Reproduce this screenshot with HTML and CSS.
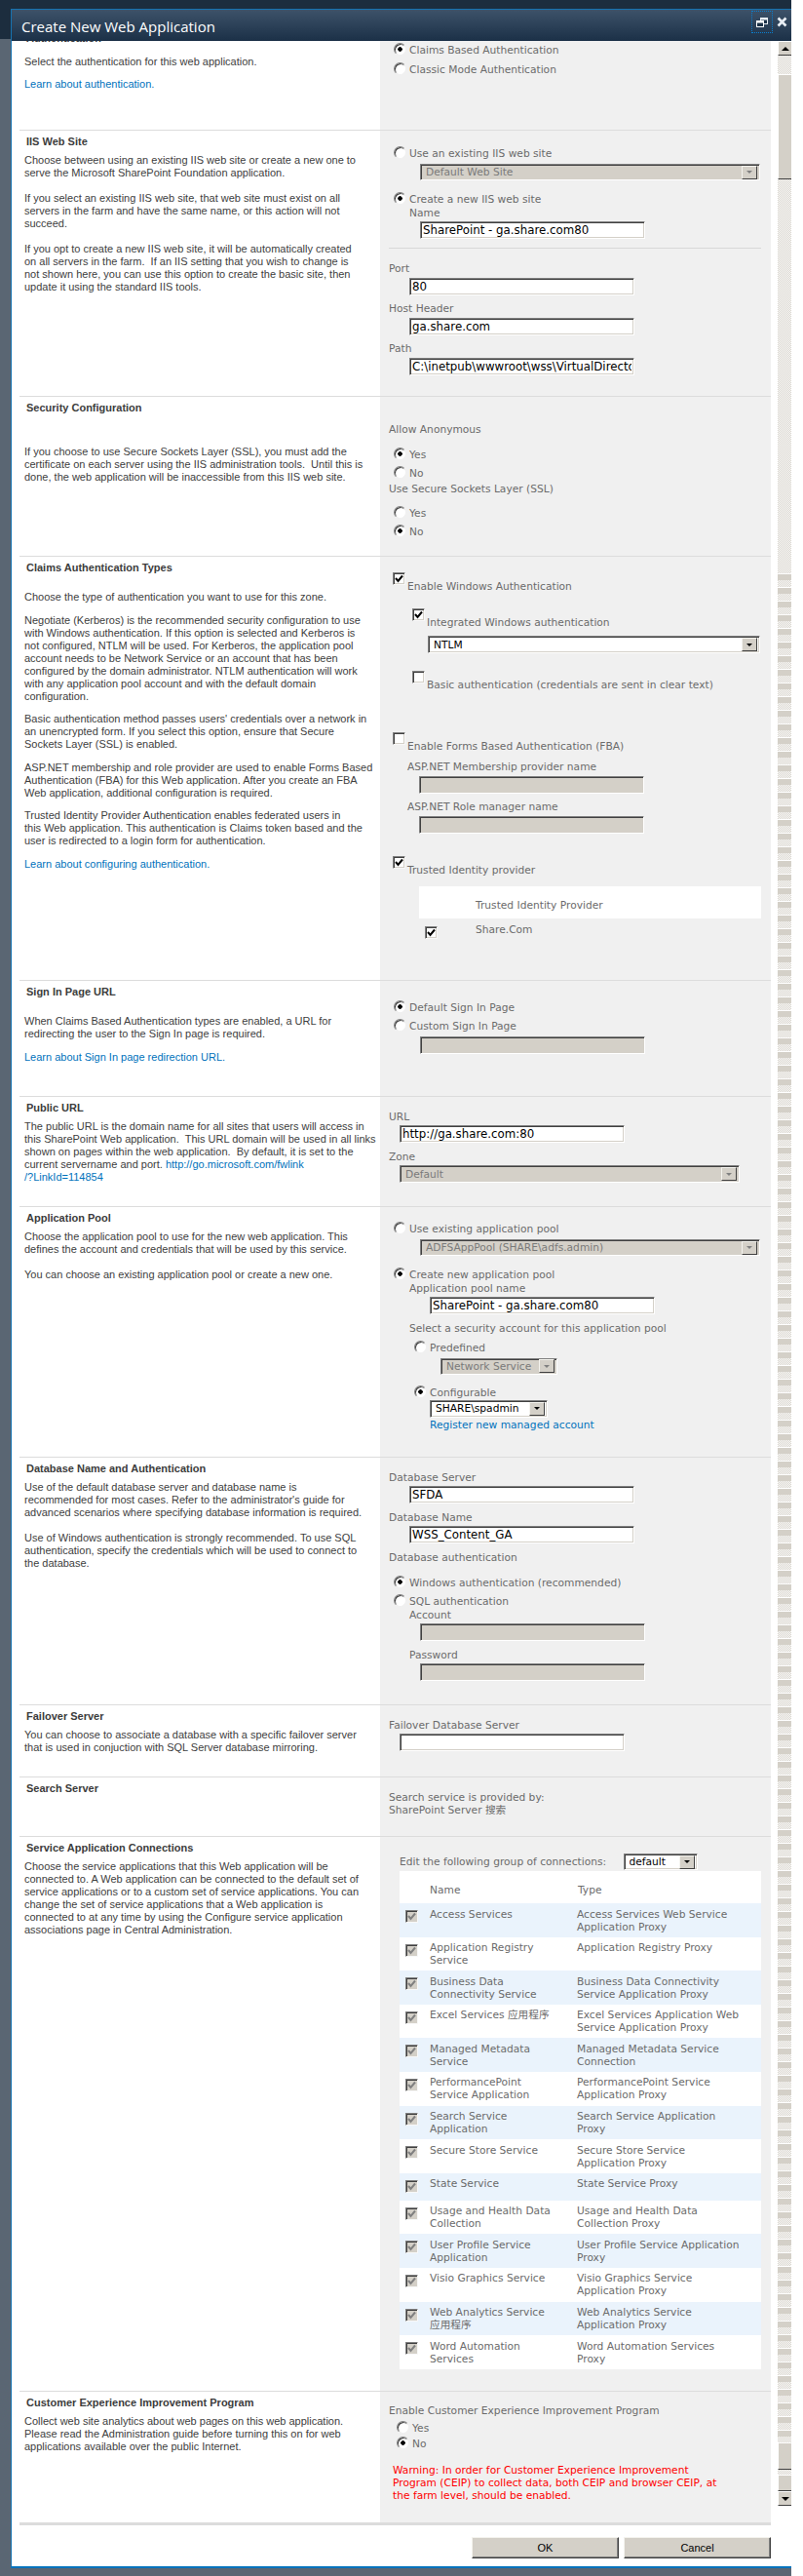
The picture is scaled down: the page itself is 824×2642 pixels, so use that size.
FILE: index.html
```html
<!DOCTYPE html>
<html>
<head>
  <meta charset="utf-8" />
  <title>Create New Web Application</title>
  <link rel="stylesheet" href="styles.css">
</head>
<body>
  <div id="backdrop">
    <div id="dialog">
      <div id="titlebar">
        <span id="dialogTitle">Create New Web Application</span>
        <span id="restoreBtn">
          <svg width="12" height="10" viewBox="0 0 12 10"><rect x="4.5" y="0.5" width="7" height="6" fill="#1c3248" stroke="#e8eef4"/><rect x="4.5" y="0.5" width="7" height="2" fill="#e8eef4"/><rect x="0.5" y="3.5" width="7" height="6" fill="#1c3248" stroke="#fff"/><rect x="0.5" y="3.5" width="7" height="2" fill="#fff"/></svg>
        </span>
        <span id="closeBtn">
          <svg width="11" height="11" viewBox="0 0 11 11"><path d="M1.5 1.5 L9.5 9.5 M9.5 1.5 L1.5 9.5" stroke="#e8eef4" stroke-width="2.6"/></svg>
        </span>
      </div>

      <div id="dialogBody">
        <div id="formArea">

          <!-- Authentication (scrolled under the title bar) -->
          <div class="row row-auth">
            <div class="info">
              <div class="head head-clipped">Authentication</div>
              <div class="desc desc-auth">
                <p>Select the authentication for this web application.</p>
                <p><a href="#">Learn about authentication.</a></p>
              </div>
            </div>
            <div class="ctl pad-auth">
              <div class="opt"><input type="radio" name="auth" checked><label>Claims Based Authentication</label></div>
              <div class="opt opt-20"><input type="radio" name="auth"><label>Classic Mode Authentication</label></div>
            </div>
          </div>

          <!-- IIS Web Site -->
          <div class="row row-iis">
            <div class="info">
              <div class="head">IIS Web Site</div>
              <div class="desc">
                Choose between using an existing IIS web site or create a new one to<br>
                serve the Microsoft SharePoint Foundation application.<br><br>
                If you select an existing IIS web site, that web site must exist on all<br>
                servers in the farm and have the same name, or this action will not<br>
                succeed.<br><br>
                If you opt to create a new IIS web site, it will be automatically created<br>
                on all servers in the farm.&nbsp; If an IIS setting that you wish to change is<br>
                not shown here, you can use this option to create the basic site, then<br>
                update it using the standard IIS tools.
              </div>
            </div>
            <div class="ctl pad-17">
              <div class="opt"><input type="radio" name="iis"><label>Use an existing IIS web site</label></div>
              <div class="sel sel-off sel-wide after-opt"><span>Default Web Site</span><i></i></div>
              <div class="opt after-sel"><input type="radio" name="iis" checked><label>Create a new IIS web site</label></div>
              <div class="lbl lbl-in1 sub-lbl">Name</div>
              <input class="txt in-2 after-lbl" type="text" value="SharePoint - ga.share.com80">
              <hr class="sep">
              <div class="field"><div class="lbl">Port</div><input class="txt in-1" type="text" value="80"></div>
              <div class="field"><div class="lbl">Host Header</div><input class="txt in-1" type="text" value="ga.share.com"></div>
              <div class="field"><div class="lbl">Path</div><input class="txt in-1" type="text" value="C:\inetpub\wwwroot\wss\VirtualDirectories\ga.share.com80"></div>
            </div>
          </div>

          <!-- Security Configuration -->
          <div class="row row-sec">
            <div class="info">
              <div class="head">Security Configuration</div>
              <div class="desc desc-far">
                If you choose to use Secure Sockets Layer (SSL), you must add the<br>
                certificate on each server using the IIS administration tools.&nbsp; Until this is<br>
                done, the web application will be inaccessible from this IIS web site.
              </div>
            </div>
            <div class="ctl pad-27">
              <div class="lbl">Allow Anonymous</div>
              <div class="opt opt-first"><input type="radio" name="anon" checked><label>Yes</label></div>
              <div class="opt"><input type="radio" name="anon"><label>No</label></div>
              <div class="lbl lbl-after-opt">Use Secure Sockets Layer (SSL)</div>
              <div class="opt opt-first-12"><input type="radio" name="ssl"><label>Yes</label></div>
              <div class="opt"><input type="radio" name="ssl" checked><label>No</label></div>
            </div>
          </div>

          <!-- Claims Authentication Types -->
          <div class="row row-claims">
            <div class="info">
              <div class="head">Claims Authentication Types</div>
              <div class="desc desc-mid">
                <p>Choose the type of authentication you want to use for this zone.</p>
                <p>Negotiate (Kerberos) is the recommended security configuration to use<br>
                with Windows authentication. If this option is selected and Kerberos is<br>
                not configured, NTLM will be used. For Kerberos, the application pool<br>
                account needs to be Network Service or an account that has been<br>
                configured by the domain administrator. NTLM authentication will work<br>
                with any application pool account and with the default domain<br>
                configuration.</p>
                <p>Basic authentication method passes users' credentials over a network in<br>
                an unencrypted form. If you select this option, ensure that Secure<br>
                Sockets Layer (SSL) is enabled.</p>
                <p>ASP.NET membership and role provider are used to enable Forms Based<br>
                Authentication (FBA) for this Web application. After you create an FBA<br>
                Web application, additional configuration is required.</p>
                <p>Trusted Identity Provider Authentication enables federated users in<br>
                this Web application. This authentication is Claims token based and the<br>
                user is redirected to a login form for authentication.</p>
                <p><a href="#">Learn about configuring authentication.</a></p>
              </div>
            </div>
            <div class="ctl pad-16">
              <div class="cb-row"><input type="checkbox" checked><label>Enable Windows Authentication</label></div>
              <div class="cb-row cb-sub cb-integrated"><input type="checkbox" checked><label>Integrated Windows authentication</label></div>
              <div class="sel sel-ntlm"><span>NTLM</span><i></i></div>
              <div class="cb-row cb-sub cb-basic"><input type="checkbox"><label>Basic authentication (credentials are sent in clear text)</label></div>
              <div class="cb-row cb-fba"><input type="checkbox"><label>Enable Forms Based Authentication (FBA)</label></div>
              <div class="fba-field">
                <div class="lbl">ASP.NET Membership provider name</div>
                <input class="txt txt-off" type="text" disabled>
              </div>
              <div class="fba-field fba-next">
                <div class="lbl">ASP.NET Role manager name</div>
                <input class="txt txt-off" type="text" disabled>
              </div>
              <div class="cb-row cb-trusted"><input type="checkbox" checked><label>Trusted Identity provider</label></div>
              <div class="tip-head">Trusted Identity Provider</div>
              <div class="tip-row"><input type="checkbox" checked><label>Share.Com</label></div>
            </div>
          </div>

          <!-- Sign In Page URL -->
          <div class="row row-sign">
            <div class="info">
              <div class="head">Sign In Page URL</div>
              <div class="desc desc-mid">
                <p>When Claims Based Authentication types are enabled, a URL for<br>
                redirecting the user to the Sign In page is required.</p>
                <p><a href="#">Learn about Sign In page redirection URL.</a></p>
              </div>
            </div>
            <div class="ctl pad-20">
              <div class="opt"><input type="radio" name="signin" checked><label>Default Sign In Page</label></div>
              <div class="opt"><input type="radio" name="signin"><label>Custom Sign In Page</label></div>
              <input class="txt txt-off in-3 after-opt" type="text" disabled>
            </div>
          </div>

          <!-- Public URL -->
          <div class="row row-public">
            <div class="info">
              <div class="head">Public URL</div>
              <div class="desc">
                The public URL is the domain name for all sites that users will access in<br>
                this SharePoint Web application.&nbsp; This URL domain will be used in all links<br>
                shown on pages within the web application.&nbsp; By default, it is set to the<br>
                current servername and port. <a href="#">http://go.microsoft.com/fwlink<br>
                /?LinkId=114854</a>
              </div>
            </div>
            <div class="ctl pad-13">
              <div class="lbl">URL</div>
              <input class="txt in-0 after-lbl" type="text" value="http://ga.share.com:80">
              <div class="field-lbl">Zone</div>
              <div class="sel sel-off sel-zone after-lbl"><span>Default</span><i></i></div>
            </div>
          </div>

          <!-- Application Pool -->
          <div class="row row-pool">
            <div class="info">
              <div class="head">Application Pool</div>
              <div class="desc">
                Choose the application pool to use for the new web application. This<br>
                defines the account and credentials that will be used by this service.<br><br>
                You can choose an existing application pool or create a new one.
              </div>
            </div>
            <div class="ctl pad-16">
              <div class="opt"><input type="radio" name="pool"><label>Use existing application pool</label></div>
              <div class="sel sel-off sel-wide after-opt"><span>ADFSAppPool (SHARE\adfs.admin)</span><i></i></div>
              <div class="opt after-sel"><input type="radio" name="pool" checked><label>Create new application pool</label></div>
              <div class="lbl lbl-in1 sub-lbl">Application pool name</div>
              <input class="txt in-4 after-lbl" type="text" value="SharePoint - ga.share.com80">
              <div class="field-lbl lbl-in1">Select a security account for this application pool</div>
              <div class="opt opt-in opt-sec"><input type="radio" name="acct"><label>Predefined</label></div>
              <div class="sel sel-off sel-pre after-opt"><span>Network Service</span><i></i></div>
              <div class="opt opt-in after-sel"><input type="radio" name="acct" checked><label>Configurable</label></div>
              <div class="sel sel-cfg"><span>SHARE\spadmin</span><i></i></div>
              <a class="reg-link" href="#">Register new managed account</a>
            </div>
          </div>

          <!-- Database Name and Authentication -->
          <div class="row row-db">
            <div class="info">
              <div class="head">Database Name and Authentication</div>
              <div class="desc">
                Use of the default database server and database name is<br>
                recommended for most cases. Refer to the administrator's guide for<br>
                advanced scenarios where specifying database information is required.<br><br>
                Use of Windows authentication is strongly recommended. To use SQL<br>
                authentication, specify the credentials which will be used to connect to<br>
                the database.
              </div>
            </div>
            <div class="ctl pad-13">
              <div class="lbl">Database Server</div>
              <input class="txt in-1 after-lbl" type="text" value="SFDA">
              <div class="field"><div class="lbl">Database Name</div><input class="txt in-1" type="text" value="WSS_Content_GA"></div>
              <div class="field"><div class="lbl">Database authentication</div></div>
              <div class="opt opt-first"><input type="radio" name="dbauth" checked><label>Windows authentication (recommended)</label></div>
              <div class="opt"><input type="radio" name="dbauth"><label>SQL authentication</label></div>
              <div class="lbl lbl-in1 sub-lbl">Account</div>
              <input class="txt txt-off in-3 after-lbl" type="text" disabled>
              <div class="field-lbl lbl-in1">Password</div>
              <input class="txt txt-off in-3 after-lbl" type="password" disabled>
            </div>
          </div>

          <!-- Failover Server -->
          <div class="row row-fail">
            <div class="info">
              <div class="head">Failover Server</div>
              <div class="desc">
                You can choose to associate a database with a specific failover server<br>
                that is used in conjuction with SQL Server database mirroring.
              </div>
            </div>
            <div class="ctl pad-13">
              <div class="lbl">Failover Database Server</div>
              <input class="txt in-0 after-lbl" type="text">
            </div>
          </div>

          <!-- Search Server -->
          <div class="row row-search">
            <div class="info">
              <div class="head">Search Server</div>
            </div>
            <div class="ctl pad-13">
              <div class="lbl">Search service is provided by:</div>
              <div class="lbl">SharePoint Server 搜索</div>
            </div>
          </div>

          <!-- Service Application Connections -->
          <div class="row row-service">
            <div class="info">
              <div class="head">Service Application Connections</div>
              <div class="desc">
                Choose the service applications that this Web application will be<br>
                connected to. A Web application can be connected to the default set of<br>
                service applications or to a custom set of service applications. You can<br>
                change the set of service applications that a Web application is<br>
                connected to at any time by using the Configure service application<br>
                associations page in Central Administration.
              </div>
            </div>
            <div class="ctl pad-17">
              <div class="group-row">
                <span class="group-lbl">Edit the following group of connections:</span>
                <div class="sel sel-group"><span>default</span><i></i></div>
              </div>
              <div class="svc-table">
                <div class="svc-head"><span></span><span>Name</span><span>Type</span></div>
                <div class="svc-row"><input type="checkbox" checked disabled><span>Access Services</span><span>Access Services Web Service<br>Application Proxy</span></div>
                <div class="svc-row"><input type="checkbox" checked disabled><span>Application Registry<br>Service</span><span>Application Registry Proxy</span></div>
                <div class="svc-row"><input type="checkbox" checked disabled><span>Business Data<br>Connectivity Service</span><span>Business Data Connectivity<br>Service Application Proxy</span></div>
                <div class="svc-row"><input type="checkbox" checked disabled><span>Excel Services 应用程序</span><span>Excel Services Application Web<br>Service Application Proxy</span></div>
                <div class="svc-row"><input type="checkbox" checked disabled><span>Managed Metadata<br>Service</span><span>Managed Metadata Service<br>Connection</span></div>
                <div class="svc-row"><input type="checkbox" checked disabled><span>PerformancePoint<br>Service Application</span><span>PerformancePoint Service<br>Application Proxy</span></div>
                <div class="svc-row"><input type="checkbox" checked disabled><span>Search Service<br>Application</span><span>Search Service Application<br>Proxy</span></div>
                <div class="svc-row"><input type="checkbox" checked disabled><span>Secure Store Service</span><span>Secure Store Service<br>Application Proxy</span></div>
                <div class="svc-row svc-short"><input type="checkbox" checked disabled><span>State Service</span><span>State Service Proxy</span></div>
                <div class="svc-row"><input type="checkbox" checked disabled><span>Usage and Health Data<br>Collection</span><span>Usage and Health Data<br>Collection Proxy</span></div>
                <div class="svc-row"><input type="checkbox" checked disabled><span>User Profile Service<br>Application</span><span>User Profile Service Application<br>Proxy</span></div>
                <div class="svc-row"><input type="checkbox" checked disabled><span>Visio Graphics Service</span><span>Visio Graphics Service<br>Application Proxy</span></div>
                <div class="svc-row"><input type="checkbox" checked disabled><span>Web Analytics Service<br>应用程序</span><span>Web Analytics Service<br>Application Proxy</span></div>
                <div class="svc-row"><input type="checkbox" checked disabled><span>Word Automation<br>Services</span><span>Word Automation Services<br>Proxy</span></div>
              </div>
            </div>
          </div>

          <!-- Customer Experience Improvement Program -->
          <div class="row row-ceip">
            <div class="info">
              <div class="head">Customer Experience Improvement Program</div>
              <div class="desc">
                Collect web site analytics about web pages on this web application.<br>
                Please read the Administration guide before turning this on for web<br>
                applications available over the public Internet.
              </div>
            </div>
            <div class="ctl pad-12">
              <div class="lbl">Enable Customer Experience Improvement Program</div>
              <div class="opt opt-ceip opt-ceip-first"><input type="radio" name="ceip"><label>Yes</label></div>
              <div class="opt opt-ceip"><input type="radio" name="ceip" checked><label>No</label></div>
              <div class="warning">Warning: In order for Customer Experience Improvement<br>
              Program (CEIP) to collect data, both CEIP and browser CEIP, at<br>
              the farm level, should be enabled.</div>
            </div>
          </div>

          <div id="footer">
            <button type="button">OK</button>
            <button type="button">Cancel</button>
          </div>
        </div>

        <div id="scrollbar">
          <div class="sb-btn"><b class="sb-up"></b></div>
          <div class="sb-track sb-gap"></div>
          <div class="sb-thumb"></div>
          <div class="sb-track sb-long"></div>
          <div class="sb-track sb-bands"></div>
          <div class="sb-thumb sb-end"></div>
          <div class="sb-track sb-gap2"></div>
          <div class="sb-thumb sb-end2"></div>
          <div class="sb-btn"><b class="sb-down"></b></div>
        </div>
      </div>
    </div>
  </div>
</body>
</html>
```

FILE: styles.css
```css
html, body {
  margin: 0;
  padding: 0;
  background: #fff;
}

body {
  width: 824px;
  height: 2642px;
  overflow: hidden;
  font-family: "Liberation Sans", Arial, sans-serif;
  font-size: 11px;
}

#backdrop {
  width: 812px;
  height: 2642px;
  box-sizing: border-box;
  padding: 9px 0 0 11px;
  background: linear-gradient(#1c2d3e 0, #1c2d3e 40px, #5a6673 40px);
}

#dialog {
  border-top: 1px solid #1673b1;
  border-left: 1px solid #1673b1;
  border-bottom: 2px solid #0072bc;
  height: 2625px;
  box-sizing: border-box;
  background: #fff;
  display: flex;
  flex-direction: column;
}

/* title bar */
#titlebar {
  height: 32px;
  flex: none;
  display: flex;
  align-items: center;
  padding-left: 10px;
  background: linear-gradient(#3d5269, #1b3047);
  color: #fff;
  position: relative;
}

#dialogTitle {
  font-family: "Open Sans", sans-serif;
  font-size: 15px;
  color: #fff;
  margin-top: 1px;
}

#restoreBtn {
  position: absolute;
  left: 759px;
  top: 1px;
  width: 20px;
  height: 21px;
  border: 1px dotted #0a7fd0;
  display: flex;
  align-items: center;
  justify-content: center;
}

#closeBtn {
  position: absolute;
  left: 785px;
  top: 7px;
  line-height: 0;
}

#dialogBody {
  flex: 1;
  display: flex;
  min-height: 0;
}

#formArea {
  width: 771px;
  margin-left: 8px;
  flex: none;
}

/* rows */
.row {
  display: grid;
  grid-template-columns: 370px 401px;
  box-sizing: border-box;
  border-top: 1px solid #dcdcdc;
}

.row-auth { height: 91px; border-top: 0; overflow: hidden; }
.row-iis { height: 273px; }
.row-sec { height: 164px; }
.row-claims { height: 435px; }
.row-sign { height: 119px; }
.row-public { height: 113px; }
.row-pool { height: 257px; }
.row-db { height: 254px; }
.row-fail { height: 74px; }
.row-search { height: 61px; }
.row-service { height: 569px; }
.row-ceip { height: 135px; }

.info {
  padding: 5px 5px 0 5px;
  color: #404040;
  line-height: 13px;
}

.head {
  font-weight: bold;
  color: #3c3c3c;
  padding-left: 2px;
  height: 13px;
  margin-bottom: 6px;
}

.head-clipped { margin-top: -14.5px; }

.desc { white-space: nowrap; }
.desc p { margin: 0 0 10.5px 0; }
.desc-auth { margin-top: 11px; }
.desc-mid { margin-top: 17px; }
.desc-far { margin-top: 32px; }

.info a, .reg-link {
  color: #0072bc;
  text-decoration: none;
}

.ctl {
  background: #f0f0f0;
  padding-left: 9px;
  font-family: "DejaVu Sans", Verdana, "Noto Sans CJK SC", sans-serif;
  font-size: 10.67px;
  line-height: 13px;
  color: #6b6b6b;
}

.pad-auth { padding-top: 3px; }
.pad-12 { padding-top: 12.5px; }
.pad-13 { padding-top: 13.5px; }
.pad-16 { padding-top: 16px; }
.pad-17 { padding-top: 17px; }
.pad-20 { padding-top: 20.5px; }
.pad-27 { padding-top: 27px; }

.lbl { height: 13px; white-space: nowrap; }
.lbl-in1 { margin-left: 21px; }
.sub-lbl { margin-top: 1px; }
.lbl-after-opt { margin-top: 3px; }
.field-lbl { height: 13px; margin-top: 7.5px; white-space: nowrap; }

.field { margin-top: 7.5px; }
.field .txt { margin-top: 2.5px; }

/* radios */
.opt {
  display: flex;
  align-items: flex-start;
  height: 13px;
  margin-top: 6px;
  margin-left: 5px;
  white-space: nowrap;
}

.ctl > .opt:first-child { margin-top: 0; }
.opt-20 { margin-top: 7px; }
.opt-first { margin-top: 13px; }
.opt-first-12 { margin-top: 12px; }
.opt-in { margin-left: 26px; }
.opt-sec { margin-top: 7px; }
.opt-ceip { margin-left: 8px; margin-top: 3px; }
.opt-ceip-first { margin-top: 5px; }
.after-opt { margin-top: 4px !important; }
.after-sel { margin-top: 12.5px; }

input[type="radio"] {
  appearance: none;
  margin: -1px 3px 0 0;
  width: 13px;
  height: 13px;
  flex: none;
  box-sizing: border-box;
  border-radius: 50%;
  border: 1px solid;
  border-color: #808080 #f0f0f0 #f0f0f0 #808080;
  box-shadow: inset 1px 1px 0 #404040;
  background: #fff;
}

input[type="radio"]:checked {
  background: radial-gradient(circle at 50% 50%, #000 0, #000 2px, #fff 2.5px);
}

/* checkboxes */
input[type="checkbox"] {
  appearance: none;
  margin: 0;
  width: 13px;
  height: 13px;
  flex: none;
  box-sizing: border-box;
  border: 1px solid;
  border-color: #808080 #f8f8f8 #f8f8f8 #808080;
  box-shadow: inset 1px 1px 0 #404040, inset -1px -1px 0 #d4d0c8;
  background: #fff;
}

input[type="checkbox"]:checked {
  background: #fff url("data:image/svg+xml,%3Csvg xmlns='http://www.w3.org/2000/svg' width='11' height='11'%3E%3Cpath d='M2 5 L4.5 8 L9 2.5' fill='none' stroke='%23000' stroke-width='2'/%3E%3C/svg%3E") center no-repeat;
}

input[type="checkbox"]:checked:disabled {
  background: #d4d0c8 url("data:image/svg+xml,%3Csvg xmlns='http://www.w3.org/2000/svg' width='11' height='11'%3E%3Cpath d='M2 5 L4.5 8 L9 2.5' fill='none' stroke='%23808080' stroke-width='2'/%3E%3C/svg%3E") center no-repeat;
}

.cb-row {
  display: flex;
  align-items: flex-start;
  margin-left: 4px;
  height: 21px;
  white-space: nowrap;
}

.cb-row label {
  margin: 8px 0 0 2px;
}

.cb-sub { margin-left: 24px; }
.cb-integrated { margin-top: 16px; }
.cb-basic { margin-top: 18px; }
.cb-fba { margin-top: 42px; }
.cb-trusted { margin-top: 23px; }

.fba-field { margin: 8px 0 0 19px; }
.fba-field .txt { margin: 3px 0 0 12px; }
.fba-next { margin-top: 7px; }

.tip-head {
  margin: 10px 0 0 31px;
  height: 33px;
  box-sizing: border-box;
  width: 351px;
  background: #fff;
  padding: 12.5px 0 0 58px;
}

.tip-row {
  display: flex;
  margin: 4.5px 0 0 37px;
}

.tip-row input { margin-top: 3px; }
.tip-row label { margin-left: 39px; }

/* text boxes */
.txt {
  display: block;
  box-sizing: border-box;
  height: 18px;
  padding: 0 2px;
  margin: 0;
  border: 1px solid;
  border-color: #808080 #fff #fff #808080;
  box-shadow: inset 1px 1px 0 #404040, inset -1px -1px 0 #d4d0c8;
  background: #fff;
  font-family: "DejaVu Sans", Verdana, sans-serif;
  font-size: 11.8px;
  color: #000;
  outline: 0;
}

.txt-off { background: #d4d0c8; }

.after-lbl { margin-top: 2.5px; }

.in-0 { width: 231px; margin-left: 11px; }
.in-1 { width: 231px; margin-left: 21px; }
.in-2 { width: 231px; margin-left: 32px; }
.in-3 { width: 231px; margin-left: 32px; }
.in-4 { width: 231px; margin-left: 42px; }

.fba-field .txt-off { width: 231px; }

/* drop downs */
.sel {
  display: flex;
  align-items: center;
  box-sizing: border-box;
  height: 18px;
  border: 1px solid;
  border-color: #808080 #fff #fff #808080;
  box-shadow: inset 1px 1px 0 #404040, inset -1px -1px 0 #d4d0c8;
  background: #fff;
  color: #000;
  padding: 2px 2px 2px 5px;
  white-space: nowrap;
}

.sel span { flex: 1; overflow: hidden; }

.sel i {
  width: 16px;
  height: 14px;
  flex: none;
  box-sizing: border-box;
  border: 1px solid;
  border-color: #f4f3ee #404040 #404040 #f4f3ee;
  background: #d4d0c8;
  display: flex;
  align-items: center;
  justify-content: center;
}

.sel i::after {
  content: "";
  border: 3px solid transparent;
  border-top: 3px solid #000;
  border-bottom: 0;
}

.sel-off { background: #d4d0c8; color: #7a7a7a; }
.sel-off i::after { border-top-color: #808080; }

.sel-wide { width: 349px; margin-left: 32px; height: 17px; }
.sel-zone { width: 349px; margin-left: 11px; }
.sel-ntlm { width: 341px; margin: 7px 0 0 40px; }
.sel-pre { width: 120px; margin-left: 53px; height: 17px; }
.sel-cfg { width: 121px; margin: 0.5px 0 0 42px; }
.sel-group { width: 76px; height: 17px; flex: none; }

.reg-link {
  display: block;
  margin: 1.5px 0 0 42px;
}

.sep {
  border: 0;
  border-top: 1px solid #d8d8d8;
  margin: 9px 0 14px 0;
  width: 382px;
}

/* service connections */
.group-row {
  display: flex;
  align-items: center;
  height: 17px;
  margin-left: 11px;
  white-space: nowrap;
}

.group-lbl { width: 229.5px; flex: none; }

.svc-table {
  width: 371px;
  margin: 1px 0 0 11px;
}

.svc-head, .svc-row {
  display: grid;
  grid-template-columns: 31px 151px 189px;
  white-space: nowrap;
}

.svc-head {
  height: 33px;
  background: #fff;
  padding-top: 12.5px;
  box-sizing: border-box;
}

.svc-head span:nth-child(3) { padding-left: 1px; }

.svc-row {
  height: 34.6px;
  box-sizing: border-box;
  padding-top: 4.5px;
  background: #fff;
}

.svc-row:nth-child(even) { background: #eaf3fc; }
.svc-short { height: 28px; }

.svc-row input {
  margin: 2.5px 0 0 6px;
}

.warning {
  color: #ff0000;
  margin: 14px 0 0 4px;
  white-space: nowrap;
}

/* footer */
#footer {
  border-top: 3px solid #dcdcdc;
  display: flex;
  justify-content: flex-end;
  gap: 5px;
  padding-top: 12px;
}

#footer button {
  width: 151px;
  height: 22px;
  padding: 0;
  box-sizing: border-box;
  background: #d4d0c8;
  border: 1px solid;
  border-color: #f4f3ee #404040 #404040 #f4f3ee;
  box-shadow: inset -1px -1px 0 #808080;
  font-family: "Liberation Sans", Arial, sans-serif;
  font-size: 11px;
  color: #000;
}

/* scrollbar (the screen capture repeats its thumb down the track) */
#scrollbar {
  width: 14px;
  margin-left: 7px;
  flex: none;
  display: flex;
  flex-direction: column;
}

.sb-btn {
  height: 15px;
  flex: none;
  box-sizing: border-box;
  background: #d4d0c8;
  border-left: 1px solid #fff;
  border-top: 1px solid #fff;
  border-bottom: 1px solid #404040;
  display: flex;
  align-items: center;
  justify-content: center;
}

.sb-up {
  border: 4px solid transparent;
  border-bottom: 4px solid #000;
  border-top: 0;
}

.sb-down {
  border: 4px solid transparent;
  border-top: 4px solid #000;
  border-bottom: 0;
}

.sb-track {
  background: repeating-conic-gradient(#d4d0c8 0 25%, #fff 0 50%) 0 0 / 2px 2px;
}

.sb-gap { height: 19px; }
.sb-long { height: 404px; }
.sb-bands {
  height: 1917px;
  background:
    repeating-linear-gradient(#fff 0, #fff 1px, #d4d0c8 1px, #d4d0c8 7px, transparent 7px, transparent 14px),
    repeating-conic-gradient(#d4d0c8 0 25%, #fff 0 50%) 0 0 / 2px 2px;
}

.sb-thumb {
  height: 108px;
  box-sizing: border-box;
  background: #d4d0c8;
  border-left: 1px solid #fff;
  border-top: 1px solid #fff;
  border-bottom: 1px solid #404040;
}

.sb-end { height: 28px; }
.sb-gap2 { height: 5px; }
.sb-end2 { height: 17px; }
```
